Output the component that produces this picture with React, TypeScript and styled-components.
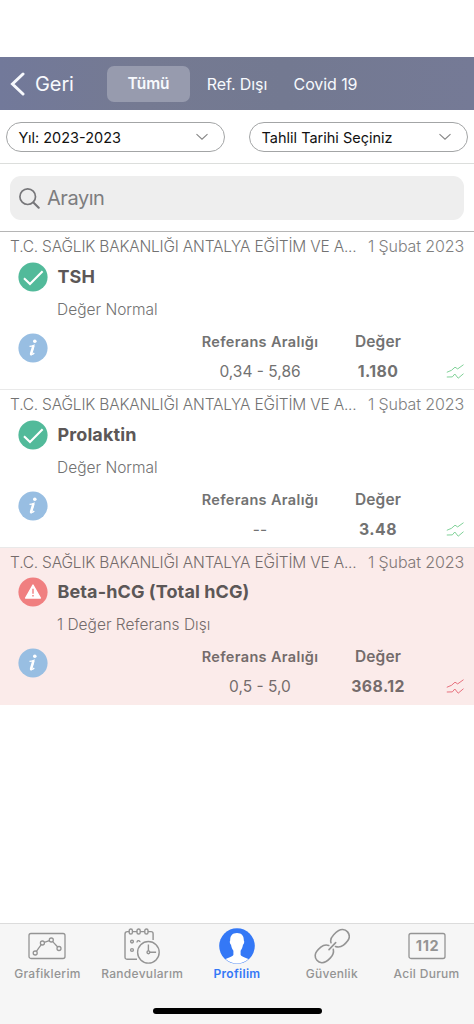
import React from "react";
import styled, { createGlobalStyle } from "styled-components";

const GlobalStyle = createGlobalStyle`
  * { box-sizing: border-box; }
  body { margin: 0; background: #fff; font-family: Inter, "Liberation Sans", sans-serif; }
  button, input { font: inherit; color: inherit; background: none; border: 0; padding: 0; margin: 0; }
  svg { display: block; flex: none; }
`;

const Screen = styled.div`
  display: flex;
  flex-direction: column;
  width: 474px;
  height: 1024px;
  padding-top: 57px;
  background: #fff;
  overflow: hidden;
  white-space: nowrap;
`;

const Header = styled.header`
  display: flex;
  align-items: center;
  height: 53px;
  flex: none;
  padding-left: 10px;
  color: #f7f9fd;
  background: linear-gradient(90deg, #72799a 0%, #757a92 30%, #737991 60%, #757a96 100%);
`;

const BackButton = styled.button`
  display: flex;
  align-items: center;
  gap: 10px;
  width: 97px;
  font-size: 20px;
  letter-spacing: -0.1px;
`;

const Tab = styled.button<{ $width: number; $active?: boolean }>`
  width: ${(p) => p.$width}px;
  height: 36px;
  border-radius: 7px;
  font-size: ${(p) => (p.$active ? 15.5 : 16)}px;
  line-height: 20px;
  font-weight: ${(p) => (p.$active ? 600 : 400)};
  letter-spacing: ${(p) => (p.$active ? -0.1 : -0.08)}px;
  background: ${(p) => (p.$active ? "#979bae" : "transparent")};
`;

const Filters = styled.div`
  display: flex;
  justify-content: space-between;
  height: 54px;
  flex: none;
  padding: 12px 6px 0;
  border-bottom: 1px solid #dcdedc;
`;

const Select = styled.button`
  display: flex;
  align-items: center;
  justify-content: space-between;
  width: 219px;
  height: 30px;
  padding: 0 16px 0 11.5px;
  border: 1px solid #a3a5a6;
  border-radius: 15px;
  font-size: 14.5px;
  color: #111;
`;

const SearchArea = styled.div`
  height: 68px;
  flex: none;
  padding: 12px 10px 0;
  border-bottom: 1px solid #b5b5b5;
`;

const SearchBox = styled.div`
  display: flex;
  align-items: center;
  gap: 7px;
  height: 44px;
  padding-left: 9px;
  border-radius: 11px;
  background: #eee;
  font-size: 20px;
  letter-spacing: -0.45px;
  color: #7d7d7f;
`;

const CardTop = styled.div`
  display: flex;
  justify-content: space-between;
  align-items: center;
  height: 28px;
  font-weight: 300;
`;

const Card = styled.article<{ $alert?: boolean }>`
  display: flex;
  flex-direction: column;
  height: ${(p) => (p.$alert ? 157 : 158)}px;
  flex: none;
  padding: 0 10px;
  background: ${(p) => (p.$alert ? "#fbebea" : "transparent")};
  border-bottom: 1px solid ${(p) => (p.$alert ? "#fbebea" : "#e9e9e9")};
  color: ${(p) => (p.$alert ? "#746b6b" : "#727272")};

  ${CardTop} {
    margin-bottom: ${(p) => (p.$alert ? -1 : 0)}px;
  }
`;

const Hospital = styled.span`
  font-size: 15.5px;
  letter-spacing: -0.19px;
`;

const DateText = styled.span`
  font-size: 16px;
  letter-spacing: -0.12px;
  opacity: 0.9;
`;

const TitleRow = styled.div`
  display: flex;
  align-items: center;
  gap: 9.5px;
  height: 33px;
  padding-left: 8px;
`;

const Title = styled.h2`
  margin: 0;
  font-size: 18px;
  font-weight: 700;
  letter-spacing: 0.1px;
  color: #5c5757;
`;

const Status = styled.p`
  margin: 0;
  padding-left: 47px;
  height: 31px;
  line-height: 33px;
  font-size: 15.5px;
  font-weight: 300;
`;

const Results = styled.div`
  display: grid;
  grid-template-columns: 30px 1fr 118px 118px 9px 18px;
  height: 60px;
  padding-left: 8px;
`;

const InfoSlot = styled.div`
  padding-top: 9px;
`;

const Column = styled.div`
  display: flex;
  flex-direction: column;
  align-items: center;
  line-height: 30px;
  padding-top: 3px;
`;

const ColumnName = styled.strong<{ $large?: boolean }>`
  height: 30px;
  font-size: ${(p) => (p.$large ? 15.5 : 14.5)}px;
  font-weight: 600;
  letter-spacing: ${(p) => (p.$large ? 0.1 : 0.35)}px;
`;

const ColumnValue = styled.span<{ $bold?: boolean }>`
  height: 30px;
  font-size: ${(p) => (p.$bold ? 15.8 : 15.5)}px;
  line-height: ${(p) => (p.$bold ? 29 : 30)}px;
  font-weight: ${(p) => (p.$bold ? 700 : 400)};
  letter-spacing: ${(p) => (p.$bold ? 0.45 : 0)}px;
`;

const TrendSlot = styled.div`
  grid-column: 6;
  padding-top: 40px;
`;

const TabBar = styled.nav`
  display: grid;
  grid-template-columns: repeat(5, 1fr);
  grid-template-rows: 84px 6px;
  height: 101px;
  margin-top: auto;
  flex: none;
  border-top: 1px solid #dcdcdc;
  background: #f6f6f6;
`;

const NavItem = styled.button<{ $active?: boolean }>`
  display: flex;
  flex-direction: column;
  align-items: center;
  padding-top: 4px;
  font-size: 12px;
  line-height: 16px;
  font-weight: ${(p) => (p.$active ? 600 : 500)};
  letter-spacing: 0.3px;
  color: ${(p) => (p.$active ? "#3478f6" : "#949494")};
`;

const NavLabel = styled.span`
  margin-top: 2px;
`;

const HomeIndicator = styled.div`
  grid-column: 1 / -1;
  justify-self: center;
  width: 169px;
  height: 6px;
  border-radius: 3px;
  background: #000;
`;

const Chevron = () => (
  <svg width="12" height="8" viewBox="0 0 12 8" fill="none" stroke="#858585" strokeWidth="1.1">
    <path d="M.5 1.2 6 6.2 11.5 1.2" />
  </svg>
);

const CheckIcon = () => (
  <svg width="30" height="30" viewBox="0 0 30 30">
    <circle cx="15" cy="15" r="14.6" fill="#52ba9a" />
    <path d="m6 16.2 6 5.8L24.6 9.3" fill="none" stroke="#fff" strokeWidth="2.1" />
  </svg>
);

const AlertIcon = () => (
  <svg width="30" height="30" viewBox="0 0 30 30">
    <circle cx="15" cy="15" r="14.6" fill="#f07f80" />
    <path d="M15 8 22.4 21H7.6Z" fill="#fff" stroke="#fff" strokeWidth="1.4" strokeLinejoin="round" />
    <path d="M15 11.7v5M15 18v1.6" stroke="#f07f80" strokeWidth="1.4" />
  </svg>
);

const InfoIcon = () => (
  <svg width="30" height="30" viewBox="0 0 30 30">
    <circle cx="15" cy="15" r="14.6" fill="#98bee2" />
    <circle cx="16.8" cy="8.2" r="1.8" fill="#fff" />
    <path d="M11.5 13.4c2-.1 3.2-.6 4.4-1.1l-2.4 8.3c-.3 1.3.6 1.2 2.8-.7" fill="none" stroke="#fff" strokeWidth="1.3" />
    <path d="m15.4 12.8-2.2 7.5c-.2.9-.1 1.3.5 1.3" fill="none" stroke="#fff" strokeWidth="2.5" />
  </svg>
);

const TrendIcon = ({ color }: { color: string }) => (
  <svg width="18" height="16" viewBox="0 0 18 16" fill="none" stroke={color} strokeWidth=".95">
    <path d="M.8 8.3 5.5 6.3 9 3.2l2.7 1.7L17.5.7M.8 13l5.5-.1L8.8 10l3.4 4.2 5.3-4.5" />
  </svg>
);

const GraphIcon = () => (
  <svg width="38" height="36" viewBox="0 0 38 36" fill="none" stroke="currentColor" strokeWidth="1.3">
    <rect x="1" y="5.5" width="36" height="25" rx="2" />
    <circle cx="7.2" cy="25" r="2" /><circle cx="14.4" cy="15" r="2" />
    <circle cx="23.3" cy="12" r="2" /><circle cx="31" cy="20.5" r="2" />
    <path d="m8.4 23.4 4.8-6.8m3.1-2.2 5-1.8m3.4 1 5 5.4" />
  </svg>
);

const CalendarIcon = () => (
  <svg width="36" height="36" viewBox="0 0 36 36" fill="none" stroke="currentColor" strokeWidth="1.4">
    <path d="M13 31.2H3Q1 31.2 1 29V6q0-2.4 2.4-2.4h1.8m3.2 0H13m3.2 0h4.6m3.2 0h3q2.1 0 2.1 2.1V12" />
    <rect x="5.2" y="1" width="3.2" height="5" rx="1.6" /><rect x="13" y="1" width="3.2" height="5" rx="1.6" />
    <rect x="20.8" y="1" width="3.2" height="5" rx="1.6" />
    <circle cx="8" cy="13.6" r="1.4" /><circle cx="8" cy="22" r="1.4" />
    <path d="M13.2 14.5a1.4 1.4 0 1 1 2.7-.4" />
    <circle cx="24.4" cy="24.3" r="10.8" /><circle cx="24.4" cy="24.3" r="1.4" />
    <path d="M24.4 16.5V23m1.4 1.3h6.3" />
  </svg>
);

const ProfileIcon = () => (
  <svg width="36" height="36" viewBox="0 0 36 36">
    <circle cx="18" cy="18" r="17.8" fill="#3478f6" />
    <path d="M18 5c-4.9 0-7 3-6.8 7.5-.8.5-.3 3.6.8 4.2.4 2.6 1.3 4.6 2.4 6v4c-.7 2-4.7 2.8-7.8 4.4a16.7 16.7 0 0 0 22.8 0c-3.1-1.6-7.1-2.4-7.8-4.4v-4c1.1-1.4 2-3.4 2.4-6 1.1-.6 1.6-3.7.8-4.2C25 8 22.9 5 18 5Z" fill="#fff" />
  </svg>
);

const LinkIcon = () => (
  <svg width="36" height="36" viewBox="0 0 36 36" fill="none" stroke="currentColor" strokeWidth="1.6" strokeLinecap="round">
    <path d="M17 14.7c-1.1-3.1.2-5.4 2.7-8 2.8-3 5.4-5.4 9-5.2 3.9.2 6.8 3.6 6.6 7.4-.2 3.6-3.2 6.1-5.8 8.2-2.7 2.1-5.4 2.4-8 1.4" />
    <path d="M14.8 17.5c-2.7-1-5.4-.5-8 1.7-2.7 2.3-5.4 4.6-5.6 8-.3 3.8 2.7 7.2 6.5 7.5 3.5.2 6.1-2 8.7-4.8 2.4-2.6 3.7-5 2.9-8.6" />
    <path d="m15 21.6 6.7-7" />
  </svg>
);

const EmergencyIcon = () => (
  <svg width="38" height="36" viewBox="0 0 38 36">
    <rect x="1" y="5.5" width="36" height="25" rx="2" fill="none" stroke="currentColor" strokeWidth="1.3" />
    <text x="19.5" y="23.2" textAnchor="middle" fontSize="14.5" fontWeight="700" letterSpacing=".6" fill="currentColor">112</text>
  </svg>
);

const tests = [
  { name: "TSH", status: "Değer Normal", range: "0,34 - 5,86", value: "1.180" },
  { name: "Prolaktin", status: "Değer Normal", range: "--", value: "3.48" },
  { name: "Beta-hCG (Total hCG)", status: "1 Değer Referans Dışı", range: "0,5 - 5,0", value: "368.12", alert: true },
];

const nav = [
  { label: "Grafiklerim", icon: <GraphIcon /> },
  { label: "Randevularım", icon: <CalendarIcon /> },
  { label: "Profilim", icon: <ProfileIcon />, active: true },
  { label: "Güvenlik", icon: <LinkIcon /> },
  { label: "Acil Durum", icon: <EmergencyIcon /> },
];

export default function App() {
  return (
    <Screen>
      <GlobalStyle />
      <Header>
        <BackButton>
          <svg width="15" height="24" viewBox="0 0 15 24" fill="none" stroke="currentColor" strokeWidth="3" strokeLinecap="round">
            <path d="M13 2 2.5 12 13 22" />
          </svg>
          Geri
        </BackButton>
        <Tab $width={83} $active>Tümü</Tab>
        <Tab $width={94}>Ref. Dışı</Tab>
        <Tab $width={83}>Covid 19</Tab>
      </Header>
      <Filters>
        <Select>Yıl: 2023-2023<Chevron /></Select>
        <Select>Tahlil Tarihi Seçiniz<Chevron /></Select>
      </Filters>
      <SearchArea>
        <SearchBox>
          <svg width="21" height="21" viewBox="0 0 21 21" fill="none" stroke="#77777a" strokeWidth="1.7" strokeLinecap="round">
            <circle cx="8.7" cy="8.7" r="7.8" />
            <path d="m14.4 14.4 5.3 5.3" strokeWidth="2.1" />
          </svg>
          Arayın
        </SearchBox>
      </SearchArea>
      {tests.map((t) => (
        <Card key={t.name} $alert={t.alert}>
          <CardTop>
            <Hospital>T.C. SAĞLIK BAKANLIĞI ANTALYA EĞİTİM VE A...</Hospital>
            <DateText>1 Şubat 2023</DateText>
          </CardTop>
          <TitleRow>
            {t.alert ? <AlertIcon /> : <CheckIcon />}
            <Title>{t.name}</Title>
          </TitleRow>
          <Status>{t.status}</Status>
          <Results>
            <InfoSlot><InfoIcon /></InfoSlot>
            <span />
            <Column>
              <ColumnName>Referans Aralığı</ColumnName>
              <ColumnValue>{t.range}</ColumnValue>
            </Column>
            <Column>
              <ColumnName $large>Değer</ColumnName>
              <ColumnValue $bold>{t.value}</ColumnValue>
            </Column>
            <TrendSlot><TrendIcon color={t.alert ? "#e66a78" : "#79cf92"} /></TrendSlot>
          </Results>
        </Card>
      ))}
      <TabBar>
        {nav.map((n) => (
          <NavItem key={n.label} $active={n.active}>
            {n.icon}
            <NavLabel>{n.label}</NavLabel>
          </NavItem>
        ))}
        <HomeIndicator />
      </TabBar>
    </Screen>
  );
}
